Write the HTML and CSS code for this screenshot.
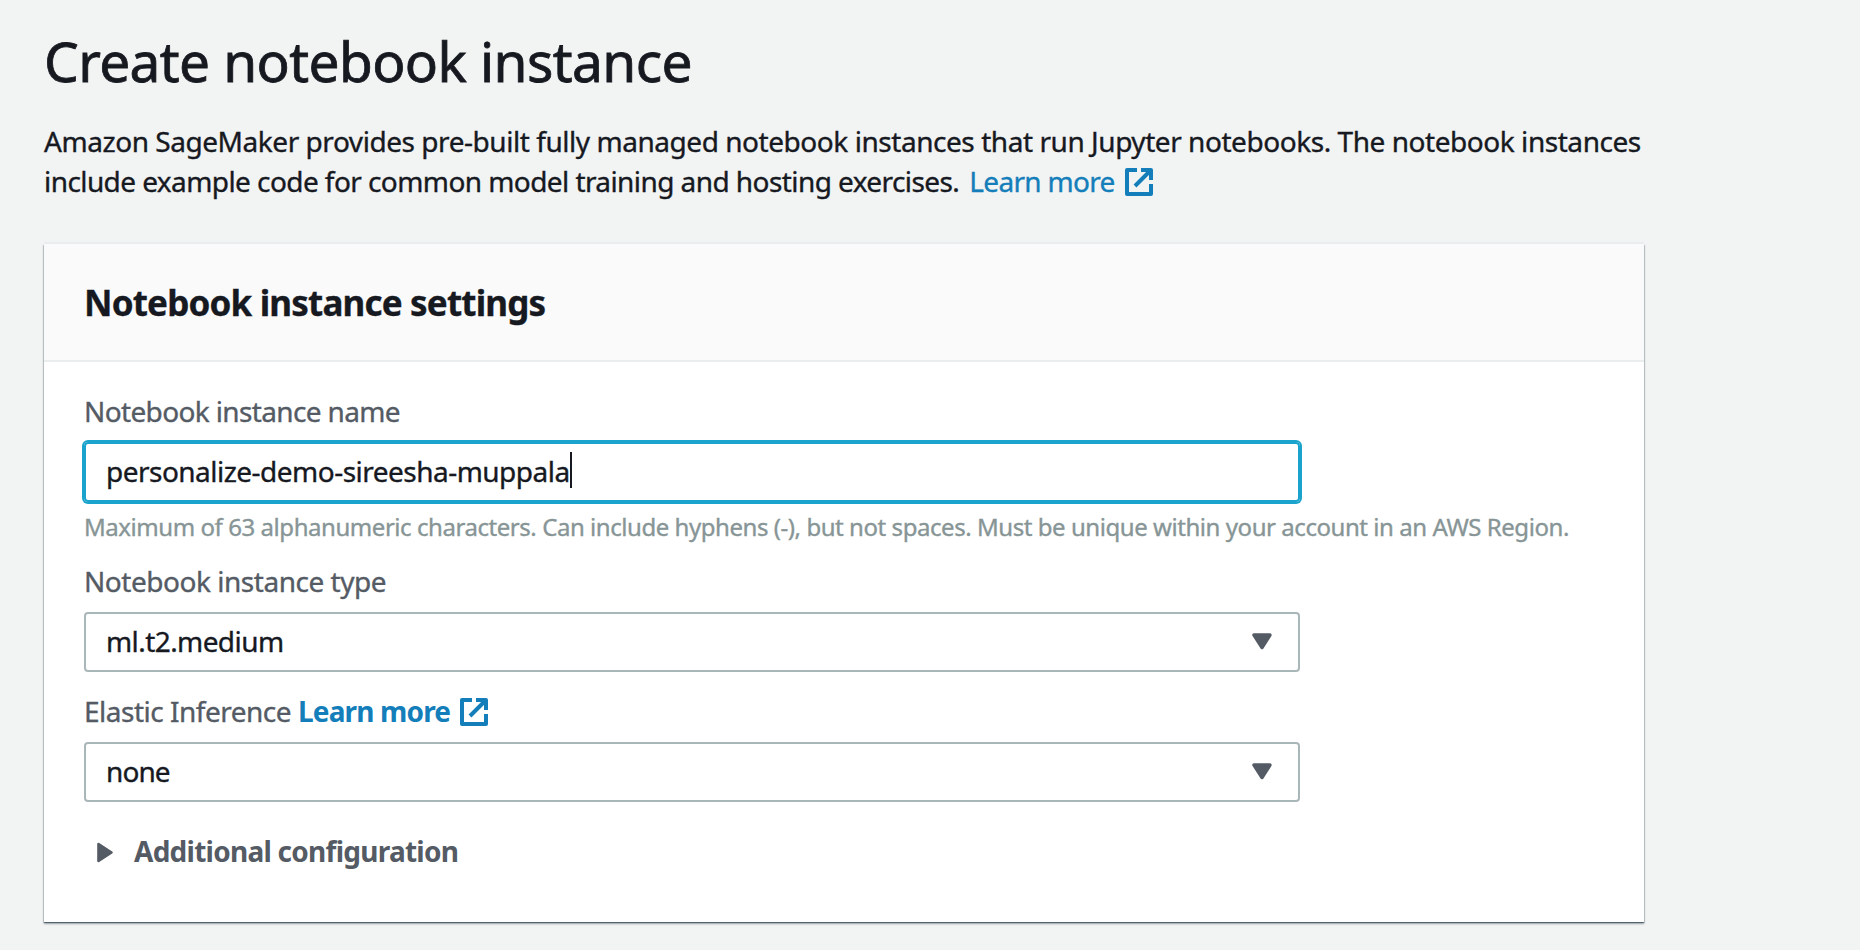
FILE: index.html
```html
<!DOCTYPE html>
<html lang="en">
<head>
<meta charset="utf-8">
<title>Create notebook instance</title>
<link rel="stylesheet" href="styles.css">
</head>
<body>
<main class="page">
  <h1 class="title">Create notebook instance</h1>
  <p class="intro">Amazon SageMaker provides pre-built fully managed notebook instances that run Jupyter notebooks. The notebook instances<br><span class="intro-end">include example code for common model training and hosting exercises.</span><a class="link intro-link">Learn more<svg class="external" viewBox="0 0 28 28"><path d="M12 2H2V26H26V16M16 2H26V12M25 3L10 18"/></svg></a></p>

  <section class="card">
    <header class="card-header"><h2 class="card-title">Notebook instance settings</h2></header>
    <div class="card-body">
      <div class="label label-name">Notebook instance name</div>
      <div class="control input focused"><span class="value value-name">personalize-demo-sireesha-muppala</span><span class="caret"></span></div>
      <div class="hint">Maximum of 63 alphanumeric characters. Can include hyphens (-), but not spaces. Must be unique within your account in an AWS Region.</div>

      <div class="label label-type">Notebook instance type</div>
      <div class="control select"><span class="value value-type">ml.t2.medium</span><svg class="arrow" viewBox="0 0 20 17"><path d="M2 2H18L10 14.5Z"/></svg></div>

      <div class="label label-elastic"><span>Elastic Inference</span><a class="link label-link">Learn more<svg class="external" viewBox="0 0 28 28"><path d="M12 2H2V26H26V16M16 2H26V12M25 3L10 18"/></svg></a></div>
      <div class="control select"><span class="value value-none">none</span><svg class="arrow" viewBox="0 0 20 17"><path d="M2 2H18L10 14.5Z"/></svg></div>

      <div class="expander"><svg class="expand-icon" viewBox="0 0 17 21"><path d="M1.5 2V19L14.5 10.5Z"/></svg><span>Additional configuration</span></div>
    </div>
  </section>
</main>
</body>
</html>
```
FILE: styles.css
```css
* { box-sizing: border-box; }

body {
  margin: 0;
  background: #f2f3f3;
  color: #16191f;
  font: 28px/40px "Noto Sans", "Open Sans", sans-serif;
  -webkit-text-stroke: 0.35px currentColor;
}

.page {
  width: 1644px;
  height: 950px;
  padding: 31px 0 0 44px;
}

.title {
  margin: 0 0 30px;
  font-size: 55px;
  font-weight: 400;
  line-height: 60px;
  letter-spacing: -0.6px;
  -webkit-text-stroke-width: 0.8px;
}

.intro {
  height: 80px;
  margin: 0 0 43px;
  white-space: nowrap;
  letter-spacing: -0.45px;
}

.intro-end { letter-spacing: -0.575px; }

.link { color: #147eba; }

.intro-link {
  margin-left: 10px;
  letter-spacing: -0.7px;
}

.external {
  width: 28px;
  height: 28px;
  margin-left: 10px;
  vertical-align: -4px;
  fill: none;
  stroke: #147eba;
  stroke-width: 4;
  stroke-linejoin: round;
}

.card {
  height: 678px;
  background: #fff;
  box-shadow: 0 2px 2px 0 rgba(0, 28, 36, 0.3), 0 1px 1px 0 rgba(0, 28, 36, 0.4), 1px 1px 1px rgba(0, 28, 36, 0.1), -1px 1px 1px rgba(0, 28, 36, 0.1), 0 -2px 0 #eaeded;
}

.card-header {
  display: flex;
  align-items: center;
  height: 118px;
  padding: 2px 40px 0;
  background: #fafafa;
  border-bottom: 2px solid #eaeded;
}

.card-title {
  margin: 0;
  font-size: 35px;
  font-weight: 700;
  line-height: 44px;
  letter-spacing: -0.82px;
}

.card-body {
  display: flex;
  flex-direction: column;
  padding: 29px 40px 0;
}

.label {
  margin-bottom: 11px;
  color: #545b64;
  white-space: nowrap;
}

.label-name { letter-spacing: -0.64px; }

.control {
  display: flex;
  align-items: center;
  width: 1216px;
  height: 60px;
  padding: 0 20px;
  border: 2px solid #aab7b8;
  border-radius: 4px;
}

.focused {
  border-color: #1aa3cc;
  box-shadow: 0 0 0 2px #1aa3cc;
}

.value { padding-bottom: 2px; }
.value-name { letter-spacing: -0.52px; }
.value-type { letter-spacing: -0.58px; }
.value-none { letter-spacing: -0.9px; }

.caret {
  width: 2px;
  height: 36px;
  margin-bottom: 4px;
  background: #16191f;
}

.hint {
  margin-top: 7px;
  color: #879596;
  font-size: 24px;
  line-height: 36px;
  letter-spacing: -0.445px;
  white-space: nowrap;
}

.label-type {
  margin-top: 16px;
  letter-spacing: -0.47px;
}

.label-elastic {
  display: flex;
  gap: 7px;
  margin-top: 19px;
  letter-spacing: -0.5px;
}

.label-link {
  font-weight: 700;
  letter-spacing: -0.85px;
  -webkit-text-stroke-width: 0;
}

.select { justify-content: space-between; }

.arrow {
  width: 20px;
  height: 17px;
  margin: 0 6px 1px 0;
  fill: #545b64;
  stroke: #545b64;
  stroke-width: 3.4;
  stroke-linejoin: round;
}

.expander {
  display: flex;
  align-items: center;
  gap: 20px;
  margin-top: 29px;
  padding-left: 13px;
  color: #545b64;
  font-weight: 700;
  letter-spacing: -0.74px;
  -webkit-text-stroke-width: 0;
}

.expand-icon {
  width: 17px;
  height: 21px;
  margin-top: 2px;
  fill: #545b64;
  stroke: #545b64;
  stroke-width: 2.6;
  stroke-linejoin: round;
}
```
